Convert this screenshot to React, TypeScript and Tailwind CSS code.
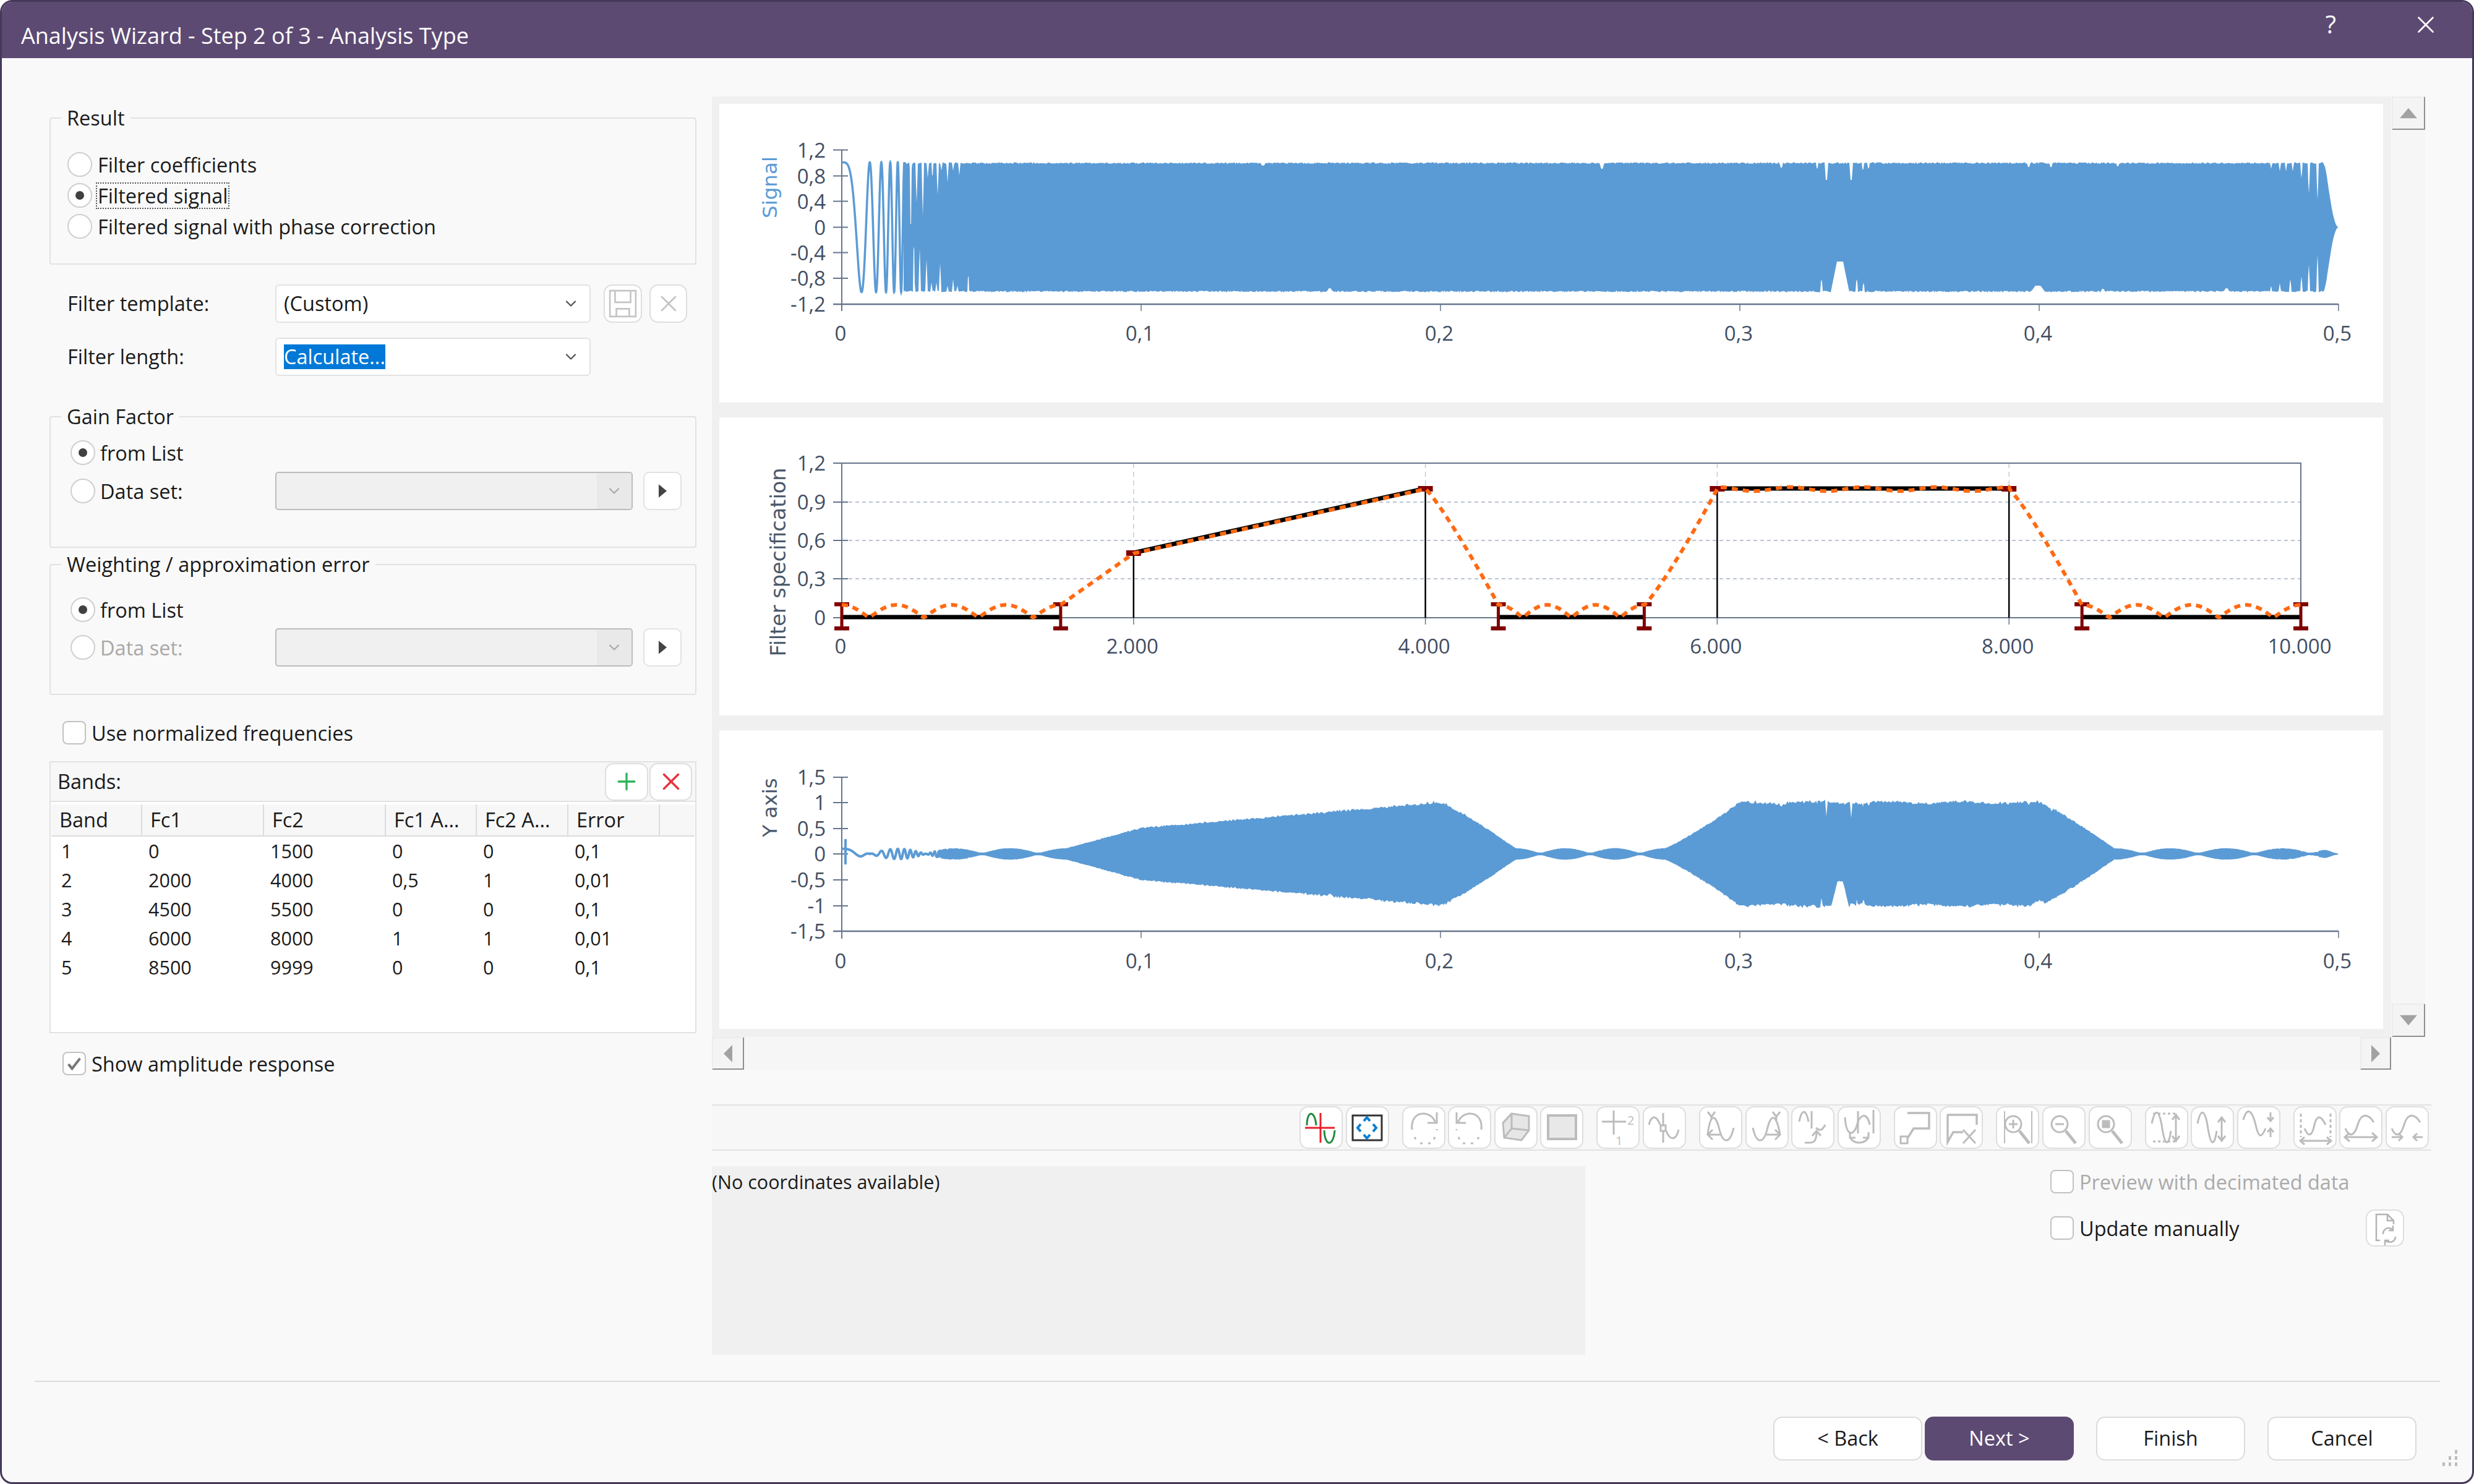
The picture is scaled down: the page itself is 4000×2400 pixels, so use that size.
import React from 'react';
import { ChevronDown, X, Plus } from 'lucide-react';

const BLUE = '#5b9bd5';

// notches in the signal envelope: [x, depth as fraction, half width]
const TOP_NOTCH = [
  [1472.5, 0.95, 1.6], [1482, 0.62, 1.6], [1492, 0.82, 1.6], [1500, 0.24, 1.5], [1507.5, 0.2, 1.5], [1516, 0.5, 1.6],
  [1522, 0.13, 1.5], [1532, 0.31, 1.5], [1541, 0.13, 1.5], [1551, 0.2, 1.5],
  [2042, 0.05, 5], [2590, 0.1, 4], [2880, 0.08, 3], [2938, 0.1, 2], [2953, 0.27, 3], [2993, 0.27, 3], [3012, 0.12, 2],
  [3021, 0.1, 2], [3280, 0.07, 3], [3316, 0.07, 3], [3424, 0.06, 3], [3672, 0.1, 1.5], [3686, 0.14, 1.5], [3696, 0.14, 1.5],
  [3707, 0.14, 1.5], [3721, 0.24, 1.7], [3733, 0.48, 1.7], [3747, 0.57, 1.7],
];
const BOT_NOTCH = [
  [1477.6, 0.7, 1.6], [1487, 0.67, 1.6], [1498, 0.5, 1.6], [1506, 0.15, 1.5], [1514, 0.15, 1.5], [1520, 0.44, 1.6],
  [1532, 0.1, 1.5], [1541, 0.2, 1.5], [1548, 0.1, 1.5], [1565.6, 0.25, 1.5],
  [2150, 0.06, 5], [2945, 0.2, 2], [2975, 0.47, 15], [3002, 0.2, 2], [3013, 0.14, 2], [3295, 0.1, 12], [3400, 0.05, 4],
  [3600, 0.06, 5], [3672, 0.1, 1.5], [3686, 0.14, 1.5], [3703, 0.2, 1.7], [3721, 0.24, 1.7], [3733, 0.42, 1.7], [3747, 0.57, 1.7],
];

const hash = (i: number) => Math.abs(Math.sin(i * 12.9898) * 43758.5453) % 1;

const envFrac = (x: number, list: number[][], seed: number) => {
  let v = 1 - hash(Math.round(x / 2) + seed) * 0.022;
  for (const [nx, d, w] of list) {
    const k = 1 - Math.abs(x - nx) / w;
    if (k > 0) v = Math.min(v, 1 - d * Math.min(1, k * 1.5));
  }
  if (x > 3756) {
    const r = (3781 - x) / 25;
    v *= Math.sin((Math.PI / 2) * r * r);
  }
  return v;
};

const chirp = (dx: number) => Math.cos(Math.PI * (dx / 32) * (dx / 32));

const ripple = (f: number, spacing: number) => 0.1 * Math.abs(Math.cos((Math.PI * f) / spacing));

// filter magnitude against frequency
const H = (f: number) => {
  if (f <= 1500) return ripple(f, 375);
  if (f <= 2000) return 0.1 + ((f - 1500) / 500) * 0.4;
  if (f <= 4000) return 0.5 + ((f - 2000) / 2000) * 0.5;
  if (f <= 4500) return 1 - Math.pow((f - 4000) / 500, 1.15) * 0.9;
  if (f <= 5500) return ripple(f - 4500, 333.4);
  if (f <= 6000) return 0.1 + Math.pow((f - 5500) / 500, 1.15) * 0.9;
  if (f <= 8000) return 1 + 0.016 * Math.cos((Math.PI * (f - 6000)) / 250);
  if (f <= 8500) return 1 - Math.pow((f - 8000) / 500, 1.15) * 0.9;
  return ripple(f - 8500, 375);
};

const buildSignal = () => {
  let line = '';
  for (let dx = 0; dx <= 104; dx += 0.2) {
    line += `${line ? 'L' : 'M'}${(1361 + dx).toFixed(1)} ${(367.5 - 105 * chirp(dx)).toFixed(1)}`;
  }
  const top: string[] = [];
  const bot: string[] = [];
  for (let x = 1461; x <= 3781; x += 1) {
    top.push(`${x} ${(367.5 - 105 * envFrac(x, TOP_NOTCH, 1)).toFixed(1)}`);
    bot.unshift(`${x} ${(367.5 + 105 * envFrac(x, BOT_NOTCH, 7)).toFixed(1)}`);
  }
  return { line, fill: `M${top.join('L')}L${bot.join('L')}Z` };
};

const buildOutput = () => {
  let line = '';
  for (let dx = 0; dx <= 155; dx += 0.2) {
    const a = 83 * H(dx / 0.242) * chirp(dx);
    line += `${line ? 'L' : 'M'}${(1361 + dx).toFixed(1)} ${(1381 - a).toFixed(1)}`;
  }
  const top: string[] = [];
  const bot: string[] = [];
  for (let x = 1516; x <= 3781; x += 2) {
    const h = Math.max(H((x - 1361) / 0.242), 0.015) * 85;
    const jag = 1 - hash(x) * 0.05;
    top.push(`${x} ${(1381 - h * jag * Math.min(1, envFrac(x, TOP_NOTCH, 1))).toFixed(1)}`);
    bot.unshift(`${x} ${(1381 + h * jag * Math.min(1, envFrac(x, BOT_NOTCH, 7))).toFixed(1)}`);
  }
  return { line, fill: `M${top.join('L')}L${bot.join('L')}Z` };
};

const buildResponse = () => {
  let d = '';
  for (let f = 0; f <= 10000; f += 10) {
    d += `${d ? 'L' : 'M'}${(1361 + f * 0.2359).toFixed(1)} ${(999 - 208 * H(f)).toFixed(1)}`;
  }
  return d;
};

const signal = buildSignal();
const output = buildOutput();
const response = buildResponse();

const TICK = '#66758c';
const LABEL = '#414e63';

const YLabels = ({ items }: { items: [string, number][] }) => (
  <>
    {items.map(([t, y]) => (
      <g key={t}>
        <line x1={1347} x2={1371} y1={y} y2={y} stroke={TICK} strokeWidth={2} />
        <text x={1335} y={y + 12} textAnchor="end" fill={LABEL} fontSize={33}>{t}</text>
      </g>
    ))}
  </>
);

const XLabels = ({ items, axisY, textY }: { items: [string, number][]; axisY: number; textY: number }) => (
  <>
    {items.map(([t, x]) => (
      <g key={t}>
        <line x1={x} x2={x} y1={axisY} y2={axisY + 11} stroke={TICK} strokeWidth={1.5} />
        <text x={x - 2} y={textY} textAnchor="middle" fill={LABEL} fontSize={33}>{t}</text>
      </g>
    ))}
  </>
);

const SignalChart = () => (
  <svg viewBox="1163 168 2690 483" className="w-[2690px] h-[483px] bg-white block">
    <text transform="translate(1256 303) rotate(-90)" textAnchor="middle" fill={BLUE} fontSize={32.5} className="font-['DejaVu_Sans',sans-serif]">Signal</text>
    <line x1={1361} x2={1361} y1={242} y2={503} stroke={TICK} strokeWidth={2} />
    <line x1={1347} x2={3781} y1={492} y2={492} stroke={TICK} strokeWidth={2.5} />
    <YLabels items={[['1,2', 242.5], ['0,8', 284.5], ['0,4', 325.5], ['0', 367.5], ['-0,4', 408.5], ['-0,8', 450], ['-1,2', 492]]} />
    <XLabels axisY={492} textY={551} items={[['0', 1361], ['0,1', 1845], ['0,2', 2329], ['0,3', 2813], ['0,4', 3297], ['0,5', 3781]]} />
    <path d={signal.line} fill="none" stroke={BLUE} strokeWidth={3.5} />
    <path d={signal.fill} fill={BLUE} />
  </svg>
);

const XS = [1361, 1832.8, 2304.6, 2776.4, 3248.2, 3720];

const SpecChart = () => {
  const bar = (f: number) => 1361 + f * 0.2359;
  const bands: [number, number, number, number][] = [
    [0, 1500, 0, 0], [2000, 4000, 0.5, 1], [4500, 5500, 0, 0], [6000, 8000, 1, 1], [8500, 10000, 0, 0],
  ];
  return (
    <svg viewBox="1163 675 2690 482" className="w-[2690px] h-[482px] bg-white block">
      <text transform="translate(1270 909) rotate(-90)" textAnchor="middle" fill="#4a586c" fontSize={33.5} className="font-['DejaVu_Sans',sans-serif]">Filter specification</text>
      {[812, 874, 936].map((y) => (
        <line key={y} x1={1361} x2={3720} y1={y} y2={y} stroke="#bcc4d2" strokeWidth={2} strokeDasharray="6 5" />
      ))}
      {XS.slice(1, 5).map((x) => (
        <line key={x} x1={x} x2={x} y1={749} y2={999} stroke="#c3cbd8" strokeWidth={1.5} strokeDasharray="8 6" />
      ))}
      <path d="M1347 749H3720V999M1361 749V1010M1361 999H3720" fill="none" stroke={TICK} strokeWidth={2} />
      <YLabels items={[['1,2', 749], ['0,9', 812], ['0,6', 874], ['0,3', 936], ['0', 999]]} />
      <XLabels axisY={999} textY={1057} items={[['0', 1361], ['2.000', 1832.8], ['4.000', 2304.6], ['6.000', 2776.4], ['8.000', 3248.2], ['10.000', 3720]]} />
      {bands.map(([a, b, v1, v2]) => (
        <g key={a}>
          <line x1={bar(a)} x2={bar(b)} y1={998 - 208 * v1} y2={998 - 208 * v2} stroke="#000" strokeWidth={7} />
        </g>
      ))}
      {[[2000, 0.5], [4000, 1], [6000, 1], [8000, 1]].map(([f, v]) => (
        <g key={f}>
          <line x1={bar(f)} x2={bar(f)} y1={999 - 208 * v} y2={999} stroke="#000" strokeWidth={2.5} />
          <rect x={bar(f) - 12} y={994 - 208 * v} width={24} height={9} fill="#7f0000" />
        </g>
      ))}
      {[0, 1500, 4500, 5500, 8500, 10000].map((f) => (
        <g key={f} fill="#7f0000">
          <rect x={bar(f) - 2.5} y={977} width={5} height={42} />
          <rect x={bar(f) - 12} y={974} width={24} height={6.5} />
          <rect x={bar(f) - 12} y={1013} width={24} height={6.5} />
        </g>
      ))}
      <path d={response} fill="none" stroke="#ff6a13" strokeWidth={6} strokeDasharray="10 8" />
    </svg>
  );
};

const OutputChart = () => (
  <svg viewBox="1163 1181 2690 483" className="w-[2690px] h-[483px] bg-white block">
    <text transform="translate(1256 1306) rotate(-90)" textAnchor="middle" fill="#4a586c" fontSize={32.5} className="font-['DejaVu_Sans',sans-serif]">Y axis</text>
    <line x1={1361} x2={1361} y1={1257} y2={1518} stroke={TICK} strokeWidth={2} />
    <line x1={1347} x2={3781} y1={1506} y2={1506} stroke={TICK} strokeWidth={2.5} />
    <YLabels items={[['1,5', 1257], ['1', 1298], ['0,5', 1340], ['0', 1381], ['-0,5', 1423], ['-1', 1465], ['-1,5', 1506]]} />
    <XLabels axisY={1506} textY={1566} items={[['0', 1361], ['0,1', 1845], ['0,2', 2329], ['0,3', 2813], ['0,4', 3297], ['0,5', 3781]]} />
    <path d="M1367 1357V1398" stroke={BLUE} strokeWidth={4} />
    <path d={output.line} fill="none" stroke={BLUE} strokeWidth={4} />
    <path d={output.fill} fill={BLUE} stroke={BLUE} strokeWidth={2} />
  </svg>
);

const T = ({ children }: { children: string }) => <span className="pt-[3px]">{children}</span>;

const Radio = ({ checked }: { checked?: boolean }) => (
  <span className="flex items-center justify-center w-[40px] h-[40px] rounded-full border-2 border-[#cfcfcf] bg-white shrink-0">
    {checked && <span className="w-[14px] h-[14px] rounded-full bg-[#404040]" />}
  </span>
);

const Check = ({ checked }: { checked?: boolean }) => (
  <span className="flex items-center justify-center w-[38px] h-[38px] rounded-[8px] border-2 border-[#c2c2c2] bg-white shrink-0">
    {checked && (
      <svg viewBox="0 0 24 24" className="w-[28px] h-[28px]" fill="none" stroke="#777" strokeWidth={3.5}>
        <path d="M4 13l5 6L20 5" />
      </svg>
    )}
  </span>
);

const Group = ({ title, className, children }: { title: string; className: string; children: React.ReactNode }) => (
  <fieldset className={`border-2 border-[#e2e2e2] rounded-[4px] ${className}`}>
    <legend className="ml-[17px] px-[9px] leading-[46px]">{title}</legend>
    {children}
  </fieldset>
);

const Select = ({ children }: { children?: React.ReactNode }) => (
  <div className="flex items-center w-[510px] h-[62px] bg-white border-2 border-[#e2e2e2] rounded-[6px] pl-[12px] pr-[16px]">
    <div className="flex-1">{children}</div>
    <ChevronDown className="w-[28px] h-[28px] text-[#555]" strokeWidth={2} />
  </div>
);

const DataSetCombo = () => (
  <div className="flex items-center w-[578px] h-[62px] bg-[#f0f0f0] border-2 border-[#bcbcbc] rounded-[5px] justify-end overflow-hidden">
    <div className="flex items-center justify-center w-[56px] h-full bg-[#e9e9e9]">
      <ChevronDown className="w-[28px] h-[28px] text-[#aaa]" strokeWidth={2} />
    </div>
  </div>
);

const ArrowBtn = () => (
  <div className="flex items-center justify-center w-[62px] h-[62px] ml-[17px] bg-white border-2 border-[#e2e2e2] rounded-[10px]">
    <svg viewBox="0 0 12 24" className="w-[13px] h-[26px]"><path d="M0 2l12 10L0 22z" fill="#444" /></svg>
  </div>
);

const ROWS = [
  ['1', '0', '1500', '0', '0', '0,1', ''],
  ['2', '2000', '4000', '0,5', '1', '0,01', ''],
  ['3', '4500', '5500', '0', '0', '0,1', ''],
  ['4', '6000', '8000', '1', '1', '0,01', ''],
  ['5', '8500', '9999', '0', '0', '0,1', ''],
];
const HEADERS = ['Band', 'Fc1', 'Fc2', 'Fc1 A...', 'Fc2 A...', 'Error', ''];

const BandsTable = () => (
  <div className="grid grid-cols-[147px_197px_197px_147px_148px_148px_1fr] mx-[1px] mt-[4px] text-[30.5px]">
    {HEADERS.map((h, i) => (
      <div key={i} className={`h-[52px] flex items-center pl-[13px] text-[32.5px] bg-[#f7f7f7] border-b-2 border-[#dcdcdc] whitespace-nowrap overflow-hidden ${i < 6 ? 'border-r-2' : ''}`}>{h}</div>
    ))}
    {ROWS.map((r) =>
      r.map((c, i) => (
        <div key={`${r[0]}-${i}`} className={`h-[47px] flex items-center ${i === 0 ? 'pl-[16px]' : 'pl-[10px]'}`}>{c}</div>
      ))
    )}
  </div>
);

const ToolBtn = ({ children, className }: { children?: React.ReactNode; className?: string }) => (
  <div className={`flex items-center justify-center bg-white border-2 border-[#dedede] rounded-[14px] ${className ?? ''}`}>{children}</div>
);

const G = ({ children }: { children: React.ReactNode }) => (
  <svg viewBox="0 0 70 69" className="w-[70px] h-[69px] block shrink-0" fill="none" stroke="#bcbcbc" strokeWidth={3}>{children}</svg>
);

const SmallDigit = ({ x, y, t }: { x: number; y: number; t: string }) => (
  <text x={x} y={y} fontSize={20} fill="#bcbcbc" stroke="none">{t}</text>
);

const Lens = ({ children }: { children?: React.ReactNode }) => (
  <>
    <circle cx={28} cy={29} r={13} />
    <path d="M38 40L54 60" strokeWidth={5} />
    {children}
  </>
);

const ICON_GROUPS: React.ReactNode[][] = [
  [
    <G>
      <path d="M12 31C12 6 25 6 27 31M40 39C41 66 55 66 57 39" stroke="#1f8a3d" />
      <path d="M34 11V59M9 35H57" stroke="#e8212b" />
    </G>,
    <G>
      <rect x={11} y={15} width={47} height={40} stroke="#333" strokeWidth={3} />
      <path d="M29 24l5-6 5 6M29 46l5 6 5-6M24 29l-5 6 5 6M44 29l5 6-5 6" stroke="#0e7fd0" strokeWidth={4} />
    </G>,
  ],
  [
    <G>
      <path d="M16 38C14 20 24 11 36 12C44 13 50 17 54 26" />
      <path d="M56 10V27H41" />
      <path d="M20 50l3 5M29 60h4M42 60h4M53 50l-3 6M56 37v2" strokeDasharray="4 4" />
    </G>,
    <G>
      <path d="M54 38C56 20 46 11 34 12C26 13 20 17 16 26" />
      <path d="M14 10V27H29" />
      <path d="M50 50l-3 5M41 60h-4M28 60h-4M17 50l3 6M14 37v2" strokeDasharray="4 4" />
    </G>,
    <G>
      <path d="M28 12L56 16V39L44 55L16 51L14 27Z" fill="#e6e6e6" />
      <path d="M28 12L14 27M28 36L28 12M28 36L56 39M28 36L16 51" />
    </G>,
    <G>
      <rect x={13} y={15} width={45} height={38} fill="#e8e8e8" strokeWidth={4} />
    </G>,
  ],
  [
    <G>
      <path d="M28 7V46M9 25H48" />
      <SmallDigit x={50} y={30} t="2" />
      <SmallDigit x={31} y={63} t="1" />
    </G>,
    <G>
      <path d="M33 11V59M10 30C14 14 22 14 28 30M38 40C44 56 54 56 58 38" />
      <rect x={29} y={31} width={8} height={9} fill="#fff" />
    </G>,
  ],
  [
    <G>
      <path d="M14 46C18 12 26 12 32 34C38 62 50 62 56 35" />
      <path d="M14 9l6 8 6-8M20 17V22" />
      <path d="M36 46H14M22 38l-8 8 8 8" />
    </G>,
    <G>
      <path d="M12 35C18 62 30 62 36 34C42 12 50 12 56 46" />
      <path d="M44 9l6 8 6-8M50 17V22" />
      <path d="M34 46H56M48 38l8 8-8 8" />
    </G>,
    <G>
      <path d="M13 25C17 4 24 4 28 25M40 35C46 40 50 40 55 30M33 8V36" />
      <path d="M22 59H30C38 59 41 54 41 42M34 48l7-8 7 8" />
    </G>,
    <G>
      <path d="M12 18C14 48 24 48 30 35C36 10 48 10 52 30M58 6V44" />
      <path d="M33 8V44" />
      <path d="M20 50C26 62 44 62 50 50M20 42v9h9M50 42v9h-9" />
    </G>,
  ],
  [
    <G>
      <path d="M22 11H57V36H32L22 52" strokeWidth={3.5} />
      <rect x={11} y={49} width={11} height={11} />
    </G>,
    <G>
      <path d="M12 14H60V30" strokeWidth={3.5} />
      <path d="M13 14V58L22 42H38" strokeWidth={3.5} />
      <path d="M38 38L58 60M58 38L38 60" />
    </G>,
  ],
  [
    <G>
      <path d="M14 8V60M58 8V60" strokeWidth={2} />
      <Lens><path d="M21 29H35M28 22V36" /></Lens>
    </G>,
    <G><Lens><path d="M21 29H35" /></Lens></G>,
    <G><Lens><rect x={23} y={24} width={10} height={10} fill="#bcbcbc" /></Lens></G>,
  ],
  [
    <G>
      <path d="M13 12H50M13 57H50" strokeDasharray="4 4" />
      <path d="M11 28C16 4 22 4 27 30C32 66 38 66 42 40" />
      <path d="M50 12V58M44 22l6-8 6 8M44 48l6 8 6-8" />
    </G>,
    <G>
      <path d="M11 28C16 4 22 4 27 30C32 66 38 66 42 40" />
      <path d="M50 18V56M44 26l6-8 6 8M44 48l6 8 6-8" />
    </G>,
    <G>
      <path d="M10 22C16 0 24 6 30 30C35 54 40 50 46 36" />
      <path d="M54 10V22M49 18l5 6 5-6M54 50V36M49 42l5-6 5 6" />
    </G>,
  ],
  [
    <G>
      <path d="M12 12V50M60 12V50" strokeDasharray="5 4" />
      <path d="M18 36C24 50 30 50 34 30C38 14 44 14 52 30" />
      <path d="M12 56H60M18 50l-7 6 7 6M54 50l7 6-7 6" />
    </G>,
    <G>
      <path d="M10 36C16 50 24 50 30 30C35 12 46 10 56 26" />
      <path d="M10 50H60M17 43l-8 7 8 7M53 43l8 7-8 7" />
    </G>,
    <G>
      <path d="M10 36C16 50 24 50 30 30C35 12 46 10 56 26" />
      <path d="M10 50H26M21 44l6 6-6 6M60 50H46M51 44l-6 6 6 6" />
    </G>,
  ],
];

const SmallSave = () => (
  <svg viewBox="0 0 44 44" className="w-[46px] h-[46px]" fill="none" stroke="#c4c4c4" strokeWidth={2.5}>
    <path d="M2 2H42V42H2Z" />
    <path d="M10 3V20H34V3M12 42V30H32V42" />
  </svg>
);

const RefreshDoc = () => (
  <svg viewBox="0 0 40 60" className="w-[40px] h-[60px]" fill="none" stroke="#b4b4b4" strokeWidth={2.5}>
    <path d="M12 50H6V8H24L34 18V24M24 8V18H34" />
    <path d="M17 40C17 31 26 27 33 33M37 44C37 52 27 56 20 50M33 26V34H26M20 58V50H27" />
  </svg>
);

const ScrollBtn = ({ dir, className }: { dir: 'up' | 'down' | 'left' | 'right'; className: string }) => {
  const paths = { up: 'M0 19L12 5L24 19Z', down: 'M0 5L12 19L24 5Z', left: 'M18 0L6 12L18 24Z', right: 'M6 0L18 12L6 24Z' };
  return (
    <div className={`flex items-center justify-center bg-[#f4f4f4] border-2 border-[#ececec] border-r-[#8f8f8f] border-b-[#8f8f8f] shrink-0 ${className}`}>
      <svg viewBox="0 0 24 24" className="w-[28px] h-[28px]"><path d={paths[dir]} fill="#a2a2a2" /></svg>
    </div>
  );
};

const FootBtn = ({ children, primary, className }: { children: string; primary?: boolean; className?: string }) => (
  <div className={`flex items-center justify-center w-[241px] h-[71px] rounded-[14px] ${primary ? 'bg-[#5d4a73] text-white' : 'bg-white border-2 border-[#dcdcdc]'} ${className ?? ''}`}>{children}</div>
);

export default function App() {
  return (
    <div className="relative w-[4000px] h-[2400px] bg-[#f9f9f9] border-[3px] border-[#45385a] rounded-[20px] overflow-hidden flex flex-col text-[32.5px] text-[#1a1a1a] font-['Open_Sans','Noto_Sans',sans-serif]">
      <header className="flex justify-between h-[91px] shrink-0 bg-[#5d4a73] text-white">
        <div className="pl-[31px] pt-[33px] text-[36px] leading-[44px]">Analysis Wizard - Step 2 of 3 - Analysis Type</div>
        <div className="flex items-start pt-[14px] pr-[52px] gap-[122px]">
          <span className="text-[40px] leading-[44px]">?</span>
          <X className="w-[46px] h-[46px]" strokeWidth={1.4} />
        </div>
      </header>

      <main className="flex h-[2139px] shrink-0">
        <div className="w-[1046px] ml-[77px] shrink-0">
          <Group title="Result" className="mt-[74px] h-[260px]">
            <div className="pl-[27px] pt-[27px]">
              <div className="flex items-center h-[50px] gap-[9px]"><Radio /><T>Filter coefficients</T></div>
              <div className="flex items-center h-[50px] gap-[6px]">
                <Radio checked />
                <span className="border-2 border-dotted border-[#555] px-[1px] leading-[39px]">Filtered signal</span>
              </div>
              <div className="flex items-center h-[50px] gap-[9px]"><Radio /><T>Filtered signal with phase correction</T></div>
            </div>
          </Group>

          <div className="flex items-center mt-[32px] h-[62px] pl-[29px]">
            <span className="w-[336px]">Filter template:</span>
            <Select>(Custom)</Select>
            <ToolBtn className="w-[62px] h-[62px] ml-[21px]"><SmallSave /></ToolBtn>
            <ToolBtn className="w-[61px] h-[62px] ml-[12px]"><X className="w-[44px] h-[44px] text-[#c4c4c4]" strokeWidth={1.5} /></ToolBtn>
          </div>
          <div className="flex items-center mt-[24px] h-[62px] pl-[29px]">
            <span className="w-[336px]">Filter length:</span>
            <Select><span className="bg-[#0078d7] text-white inline-block leading-[40px]">Calculate...</span></Select>
          </div>

          <Group title="Gain Factor" className="mt-[43px] h-[235px]">
            <div className="pl-[32px] pt-[15px]">
              <div className="flex items-center h-[40px] gap-[8px]"><Radio checked /><T>from List</T></div>
              <div className="flex items-center mt-[11px] h-[62px]">
                <span className="flex items-center gap-[8px] w-[331px]"><Radio /><T>Data set:</T></span>
                <DataSetCombo />
                <ArrowBtn />
              </div>
            </div>
          </Group>

          <Group title="Weighting / approximation error" className="mt-[4px] h-[234px]">
            <div className="pl-[32px] pt-[30px]">
              <div className="flex items-center h-[40px] gap-[8px]"><Radio checked /><T>from List</T></div>
              <div className="flex items-center mt-[10px] h-[62px]">
                <span className="flex items-center gap-[8px] w-[331px] text-[#a8a8a8]"><Radio /><T>Data set:</T></span>
                <DataSetCombo />
                <ArrowBtn />
              </div>
            </div>
          </Group>

          <div className="flex items-center gap-[9px] mt-[42px] h-[38px] pl-[21px]"><Check /><T>Use normalized frequencies</T></div>

          <div className="mt-[27px] h-[440px] border-2 border-[#e2e2e2] bg-white">
            <div className="flex items-center justify-between h-[64px] bg-[#f7f7f7] border-b-2 border-[#e2e2e2] pl-[11px] pr-[5px]">
              Bands:
              <div className="flex gap-[2px]">
                <ToolBtn className="w-[70px] h-[61px]"><Plus className="w-[44px] h-[44px] text-[#2fb35a]" strokeWidth={1.8} /></ToolBtn>
                <ToolBtn className="w-[69px] h-[61px]"><X className="w-[46px] h-[46px] text-[#e8323c]" strokeWidth={1.8} /></ToolBtn>
              </div>
            </div>
            <BandsTable />
          </div>

          <div className="flex items-center gap-[9px] mt-[30px] h-[38px] pl-[21px]"><Check checked /><T>Show amplitude response</T></div>
        </div>

        <div className="ml-[25px] mt-[62px] w-[2780px] shrink-0">
          <div className="flex">
            <div className="flex flex-col gap-[24px] w-[2715px] h-[1521px] px-[12px] py-[12px] bg-[#f0f0f0] shrink-0">
              <SignalChart />
              <SpecChart />
              <OutputChart />
            </div>
            <div className="flex flex-col justify-between w-[54px] ml-[1px] bg-[#f6f6f6]">
              <ScrollBtn dir="up" className="h-[54px]" />
              <ScrollBtn dir="down" className="h-[54px]" />
            </div>
          </div>
          <div className="flex justify-between w-[2715px] h-[53px] bg-[#f6f6f6]">
            <ScrollBtn dir="left" className="w-[52px]" />
            <ScrollBtn dir="right" className="w-[50px]" />
          </div>

          <div className="flex justify-end gap-[21px] h-[75px] mt-[56px] pr-[4px] items-center bg-[#f7f7f7] border-y-2 border-[#e2e2e2]">
            {ICON_GROUPS.map((g, i) => (
              <div key={i} className="flex gap-[4.6px]">
                {g.map((icon, j) => (
                  <ToolBtn key={j} className="w-[70px] h-[69px] overflow-hidden">{icon}</ToolBtn>
                ))}
              </div>
            ))}
          </div>

          <div className="flex mt-[25px]">
            <div className="w-[1412px] h-[305px] bg-[#f0f0f0] shrink-0 text-[30.5px] leading-[50px]">(No coordinates available)</div>
            <div className="ml-[752px] pt-[6px] w-[572px] shrink-0">
              <div className="flex items-center gap-[9px] h-[38px] text-[#aaa]"><Check /><T>Preview with decimated data</T></div>
              <div className="flex items-center h-[60px] mt-[26px]">
                <Check />
                <span className="ml-[9px] flex-1 pt-[3px]">Update manually</span>
                <ToolBtn className="w-[62px] h-[60px]"><RefreshDoc /></ToolBtn>
              </div>
            </div>
          </div>
        </div>
      </main>

      <div className="h-[2px] ml-[53px] mr-[52px] bg-[#dcdcdc] shrink-0" />

      <footer className="flex justify-end pt-[56px] pr-[90px]">
        <FootBtn className="mr-[1px]">{'< Back'}</FootBtn>
        <FootBtn primary className="ml-[3px]">{'Next >'}</FootBtn>
        <FootBtn className="ml-[36px]">Finish</FootBtn>
        <FootBtn className="ml-[36px]">Cancel</FootBtn>
      </footer>

      <svg viewBox="0 0 28 28" className="absolute right-[24px] bottom-[24px] w-[28px] h-[28px]" fill="#bdbdbd">
        <path d="M24 0h4v6h-4zM24 10h4v6h-4zM14 10h4v6h-4zM24 20h4v6h-4zM14 20h4v6h-4zM4 20h4v6H4z" />
      </svg>
    </div>
  );
}
